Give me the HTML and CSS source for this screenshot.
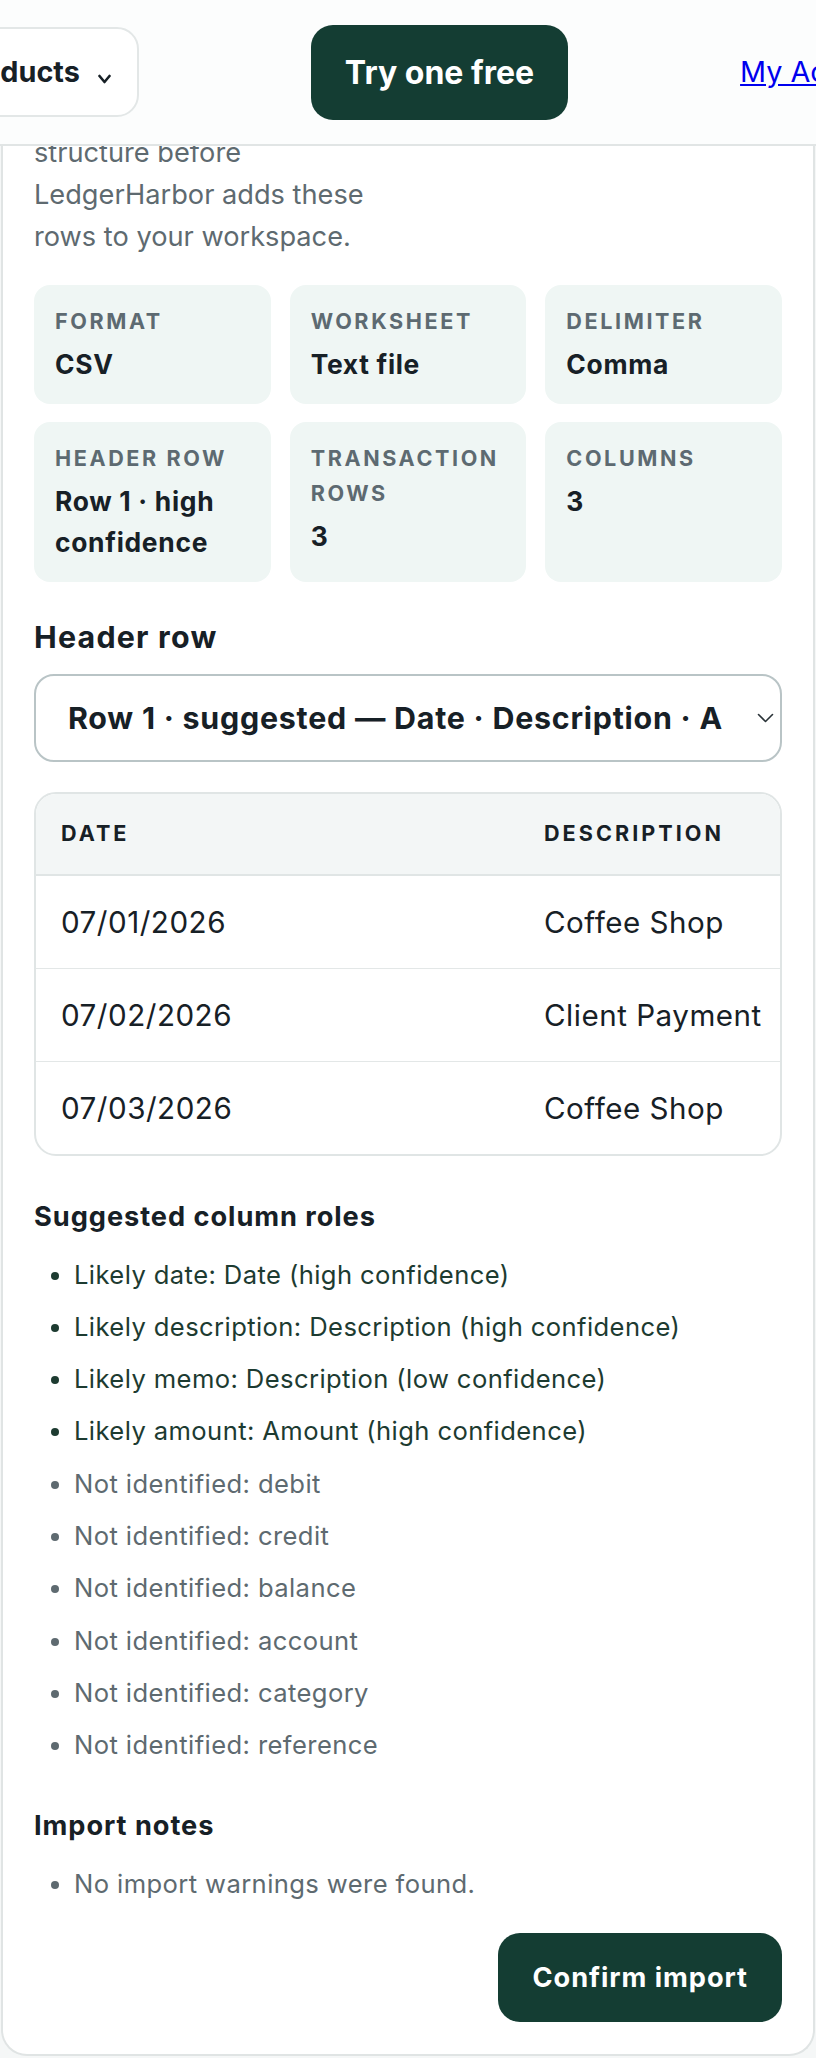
FILE: index.html
```
<!doctype html>
<html lang="en">
<head>
<meta charset="UTF-8">
<title>Review import · LedgerHarbor</title>
<link rel="stylesheet" href="styles.css">
</head>
<body>
<header class="topbar">
  <nav class="topbar-row">
    <button class="menu-btn" type="button">Products
      <svg class="menu-caret" width="13" height="10" viewBox="0 0 13 10"><polyline points="1.5,2 6.5,8 11.5,2" fill="none" stroke="#172026" stroke-width="2.6" stroke-linecap="round" stroke-linejoin="round"/></svg>
    </button>
    <a class="cta" href="#">Try one free</a>
    <a class="account" href="#">My Account</a>
  </nav>
</header>

<main class="viewport">
  <section class="panel">
    <p class="intro">Check the detected file structure before LedgerHarbor adds these rows to your workspace.</p>

    <div class="facts">
      <div class="fact"><span class="fact-label">Format</span><span class="fact-value">CSV</span></div>
      <div class="fact"><span class="fact-label">Worksheet</span><span class="fact-value">Text file</span></div>
      <div class="fact"><span class="fact-label">Delimiter</span><span class="fact-value">Comma</span></div>
      <div class="fact"><span class="fact-label">Header row</span><span class="fact-value">Row 1 · high confidence</span></div>
      <div class="fact"><span class="fact-label">Transaction rows</span><span class="fact-value">3</span></div>
      <div class="fact"><span class="fact-label">Columns</span><span class="fact-value">3</span></div>
    </div>

    <label class="field-label">Header row</label>
    <div class="select">
      <span class="select-text">Row 1 · suggested — Date · Description · Amount</span>
      <svg class="select-caret" width="17" height="10" viewBox="0 0 17 10"><polyline points="1.5,1.5 8.5,8.5 15.5,1.5" fill="none" stroke="#2a3338" stroke-width="1.6" stroke-linecap="round" stroke-linejoin="round"/></svg>
    </div>

    <div class="preview">
      <table>
        <colgroup><col class="c-date"><col class="c-desc"><col class="c-amt"></colgroup>
        <thead>
          <tr><th>Date</th><th>Description</th><th>Amount</th></tr>
        </thead>
        <tbody>
          <tr><td>07/01/2026</td><td>Coffee Shop</td><td>-4.50</td></tr>
          <tr><td>07/02/2026</td><td>Client Payment</td><td>1,250.00</td></tr>
          <tr><td>07/03/2026</td><td>Coffee Shop</td><td>-5.25</td></tr>
        </tbody>
      </table>
    </div>

    <h4 class="sub">Suggested column roles</h4>
    <ul class="roles">
      <li class="found">Likely date: Date (high confidence)</li>
      <li class="found">Likely description: Description (high confidence)</li>
      <li class="found">Likely memo: Description (low confidence)</li>
      <li class="found">Likely amount: Amount (high confidence)</li>
      <li>Not identified: debit</li>
      <li>Not identified: credit</li>
      <li>Not identified: balance</li>
      <li>Not identified: account</li>
      <li>Not identified: category</li>
      <li>Not identified: reference</li>
    </ul>

    <h4 class="sub">Import notes</h4>
    <ul class="roles">
      <li>No import warnings were found.</li>
    </ul>

    <div class="actions">
      <button class="confirm" type="button">Confirm import</button>
    </div>
  </section>
</main>
</body>
</html>
```

FILE: styles.css
```
* {
	margin: 0;
	padding: 0;
	box-sizing: border-box;
}

body {
	background: #f5f7f7;
	color: #172026;
	font-family: Inter, "Noto Sans", "Liberation Sans", sans-serif;
	font-size: 25.6px;
	line-height: 1.6;
}

/* top bar */
.topbar {
	overflow: hidden;
	height: 146px;
	background: #fcfdfd;
	border-bottom: 2px solid #e1e5e5;
}

.topbar-row {
	display: flex;
	align-items: center;
	gap: 172px;
	height: 144px;
	margin-left: -77px;
}

.menu-btn {
	display: flex;
	align-items: center;
	flex-shrink: 0;
	padding: 20px 26px 20px 28px;
	background: #fff;
	border: 2px solid #e3e7e7;
	border-radius: 22px;
	color: #172026;
	font: 700 28.8px/46px Inter, "Noto Sans", sans-serif;
}

.menu-caret {
	margin: 14px 0 0 18px;
}

.cta {
	flex-shrink: 0;
	padding: 22px 34px;
	background: #143d33;
	border-radius: 22px;
	color: #fff;
	font-size: 32px;
	font-weight: 700;
	line-height: 51px;
	text-decoration: none;
}

.account {
	flex-shrink: 0;
	color: #0000ee;
	font-size: 28.8px;
	white-space: nowrap;
}

/* page under the bar */
.viewport {
	overflow: hidden;
}

.panel {
	margin: -56px 1px 0;
	padding: 0 31px 32px;
	background: #fff;
	border: 2px solid #e0e4e4;
	border-top: 0;
	border-radius: 0 0 26px 26px;
}

.intro {
	max-width: 350px;
	color: #5e6a70;
	font-size: 27.2px;
	line-height: 42px;
}

.facts {
	display: grid;
	grid-template-columns: repeat(3, 1fr);
	gap: 18px 19px;
	margin-top: 27px;
}

.fact {
	display: flex;
	flex-direction: column;
	gap: 5px;
	padding: 19px 21px;
	background: #eff6f4;
	border-radius: 16px;
}

.fact-label {
	color: #5d6a71;
	font-size: 21.6px;
	font-weight: 700;
	line-height: 35px;
	letter-spacing: 0.12em;
	text-transform: uppercase;
}

.fact-value {
	font-size: 26.4px;
	font-weight: 700;
	line-height: 41px;
	letter-spacing: 0.7px;
}

.field-label {
	display: block;
	margin: 32px 0 14px;
	font-size: 30.4px;
	font-weight: 700;
	line-height: 46px;
	letter-spacing: 0.04em;
}

.select {
	display: flex;
	align-items: center;
	height: 88px;
	padding: 0 6px 0 32px;
	border: 2px solid #b9c4c6;
	border-radius: 20px;
}

.select-text {
	flex: 1;
	overflow: hidden;
	white-space: nowrap;
	font-size: 30.4px;
	font-weight: 700;
	letter-spacing: 0.025em;
}

.select-caret {
	margin-left: 33px;
}

/* preview table */
.preview {
	overflow: hidden;
	margin-top: 30px;
	border: 2px solid #e0e5e5;
	border-radius: 22px;
}

.preview table {
	width: 1040px;
	table-layout: fixed;
	border-collapse: collapse;
}

.c-date {
	width: 483px;
}

.c-desc {
	width: 300px;
}

.preview th {
	padding: 23px 25px;
	background: #f3f6f6;
	border-bottom: 2px solid #e0e5e5;
	font-size: 21.6px;
	font-weight: 700;
	line-height: 33.6px;
	letter-spacing: 0.14em;
	text-align: left;
	text-transform: uppercase;
}

.preview td {
	padding: 24px 25px;
	border-bottom: 1.5px solid #e3e7e7;
	font-size: 29.6px;
	line-height: 44px;
	letter-spacing: 0.5px;
	white-space: nowrap;
}

.preview tr:last-child td {
	border-bottom: 0;
}

/* roles and notes */
.sub {
	margin-top: 40px;
	font-size: 27.2px;
	font-weight: 700;
	line-height: 41px;
	letter-spacing: 0.035em;
}

.roles {
	margin-top: 17px;
	padding-left: 40px;
	color: #5e6a70;
	letter-spacing: 0.4px;
}

.roles li {
	line-height: 41px;
}

.roles li + li {
	margin-top: 11.3px;
}

.roles .found {
	color: #1d3b31;
}

.actions {
	display: flex;
	justify-content: flex-end;
	margin-top: 29px;
}

.confirm {
	padding: 24px 34px;
	background: #143d33;
	border: 0;
	border-radius: 22px;
	color: #fff;
	font: 700 27.2px/41px Inter, "Noto Sans", sans-serif;
	letter-spacing: 0.035em;
}
```
